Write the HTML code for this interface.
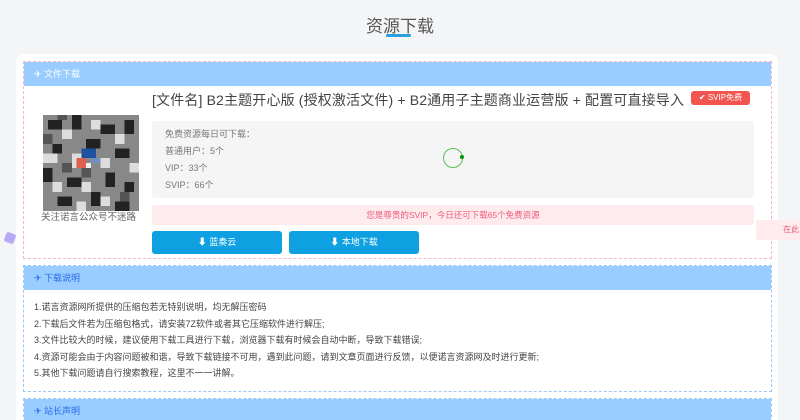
<!DOCTYPE html>
<html><head><meta charset="utf-8"><style>
*{margin:0;padding:0;box-sizing:border-box}
html,body{width:800px;height:420px;overflow:hidden}
body{background:#f4f5f7;font-family:"Liberation Sans","Noto Sans CJK SC",sans-serif;position:relative}
.t{position:absolute;top:12px;left:0;width:800px;text-align:center;font-size:17px;color:#555}
.ul{position:absolute;left:386px;top:34px;width:25px;height:3px;background:#2aa0e0;border-radius:2px}
.card{position:absolute;left:16px;top:54px;width:762px;height:380px;background:#fff;border-radius:8px}
.p{position:absolute;left:23px;width:749px;background:#fff}
.h{height:24px;background:#99ccff;font-size:9px;line-height:24px;padding-left:10px}
.abs{position:absolute}
</style></head><body>
<div class="t">资源下载</div><div class="ul"></div>
<div class="card"></div>
<div class="p" style="top:61px;height:198px;border:1px dashed #f5b8c4">
<div class="h" style="color:#fff">✈ 文件下载</div>
</div>
<div class="abs" style="left:152px;top:90px;font-size:14px;letter-spacing:0.15px;color:#444;white-space:nowrap">[文件名] B2主题开心版 (授权激活文件) + B2通用子主题商业运营版 + 配置可直接导入</div>
<div class="abs" style="left:691px;top:91px;width:59px;height:14px;background:#f2554f;border-radius:3px;color:#fff;font-size:8px;line-height:14px;text-align:center">✔ SVIP免费</div>
<svg class="abs" style="left:42px;top:115px" width="98" height="96" viewBox="0 0 20 20" shape-rendering="crispEdges">
<rect width="20" height="20" fill="#888"/>
<g fill="#222"><rect x="1" y="1" width="3" height="2"/><rect x="6" y="0" width="2" height="3"/><rect x="12" y="2" width="3" height="2"/><rect x="17" y="1" width="2" height="3"/><rect x="2" y="6" width="2" height="2"/><rect x="9" y="5" width="3" height="2"/><rect x="15" y="7" width="3" height="2"/><rect x="0" y="11" width="2" height="3"/><rect x="5" y="13" width="3" height="2"/><rect x="13" y="12" width="2" height="3"/><rect x="17" y="14" width="2" height="2"/><rect x="3" y="17" width="3" height="2"/><rect x="10" y="16" width="2" height="3"/><rect x="15" y="18" width="3" height="2"/></g>
<g fill="#ddd"><rect x="4" y="3" width="2" height="2"/><rect x="10" y="1" width="2" height="2"/><rect x="0" y="8" width="3" height="2"/><rect x="6" y="8" width="2" height="3"/><rect x="12" y="9" width="2" height="2"/><rect x="18" y="10" width="2" height="2"/><rect x="2" y="14" width="2" height="2"/><rect x="8" y="14" width="2" height="2"/><rect x="15" y="4" width="2" height="2"/><rect x="7" y="18" width="2" height="2"/><rect x="12" y="17" width="2" height="2"/></g>
<g fill="#555"><rect x="4" y="10" width="2" height="2"/><rect x="16" y="16" width="2" height="2"/><rect x="0" y="4" width="2" height="2"/><rect x="8" y="11" width="2" height="2"/><rect x="3" y="0" width="2" height="1"/></g>
<rect x="8" y="7" width="3" height="2" fill="#2050a0"/><rect x="10" y="9" width="2" height="1" fill="#7090c0"/><rect x="7" y="9" width="2" height="2" fill="#e06050"/><rect x="9" y="10" width="1" height="1" fill="#eee"/>
</svg>
<div class="abs" style="left:41px;top:209px;font-size:9.5px;color:#666">关注诺言公众号不迷路</div>
<div class="abs" style="left:152px;top:121px;width:602px;height:77px;background:#f5f5f5;border-radius:3px;font-size:9px;color:#777;line-height:17px;padding:5px 13px">免费资源每日可下载：<br>普通用户：5个<br>VIP：33个<br>SVIP：66个</div>
<div class="abs" style="left:443px;top:148px;width:20px;height:20px;border:1px solid #5cbf5c;border-radius:50%"></div>
<div class="abs" style="left:460px;top:155px;width:4px;height:4px;background:#090;border-radius:50%"></div>
<div class="abs" style="left:152px;top:205px;width:602px;height:20px;background:#fdebee;border-radius:3px;color:#ef5a7a;font-size:8.5px;line-height:20px;text-align:center">您是尊贵的SVIP，今日还可下载65个免费资源</div>
<div class="abs" style="left:756px;top:220px;width:50px;height:20px;background:#fdebee;color:#ef5a7a;font-size:8px;line-height:20px;padding-left:27px">在此</div>
<div class="abs" style="left:152px;top:231px;width:130px;height:23px;background:#0ea0e0;border-radius:3px;color:#fff;font-size:9px;line-height:23px;text-align:center">⬇ 蓝奏云</div>
<div class="abs" style="left:289px;top:231px;width:130px;height:23px;background:#0ea0e0;border-radius:3px;color:#fff;font-size:9px;line-height:23px;text-align:center">⬇ 本地下载</div>
<div class="abs" style="left:5px;top:233px;width:10px;height:10px;background:#b9a8f5;transform:rotate(20deg);border-radius:2px"></div>
<div class="p" style="top:265px;height:127px;border:1px dashed #9ccaf5">
<div class="h" style="color:#2a6ae8">✈ 下载说明</div>
<div style="padding:9px 10px;font-size:9px;color:#444;line-height:16.5px">1.诺言资源网所提供的压缩包若无特别说明，均无解压密码<br>2.下载后文件若为压缩包格式，请安装7Z软件或者其它压缩软件进行解压;<br>3.文件比较大的时候，建议使用下载工具进行下载，浏览器下载有时候会自动中断，导致下载错误;<br>4.资源可能会由于内容问题被和谐，导致下载链接不可用，遇到此问题，请到文章页面进行反馈，以便诺言资源网及时进行更新;<br>5.其他下载问题请自行搜索教程，这里不一一讲解。</div>
</div>
<div class="p" style="top:398px;height:30px;border:1px dashed #9ccaf5">
<div class="h" style="color:#2a6ae8">✈ 站长声明</div>
</div>
</body></html>
